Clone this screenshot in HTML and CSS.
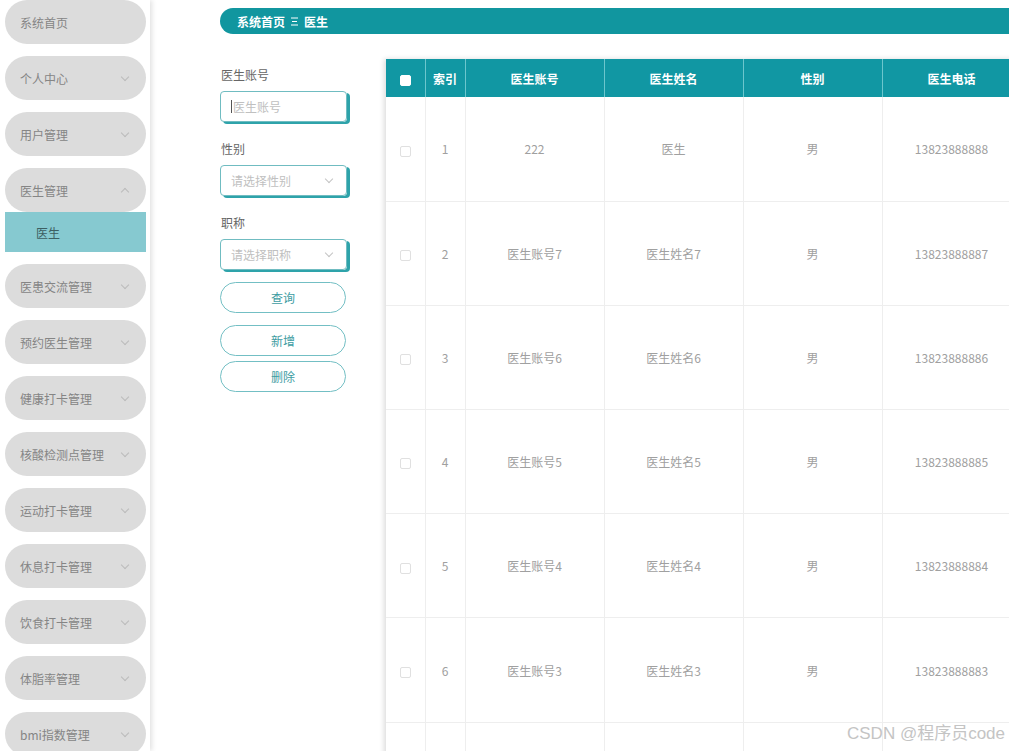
FILE: index.html
```html
<!DOCTYPE html>
<html lang="zh-CN">
<head>
    <meta charset="UTF-8">
    <title>医生</title>
    <link rel="stylesheet" href="styles.css">
</head>
<body>
    <div class="layout">
        <aside class="sidebar">
            <div class="menu-item">系统首页</div>
            <div class="menu-item">个人中心<span class="arrow down"></span></div>
            <div class="menu-item">用户管理<span class="arrow down"></span></div>
            <div class="menu-item open">医生管理<span class="arrow up"></span></div>
            <div class="sub-item">医生</div>
            <div class="menu-item">医患交流管理<span class="arrow down"></span></div>
            <div class="menu-item">预约医生管理<span class="arrow down"></span></div>
            <div class="menu-item">健康打卡管理<span class="arrow down"></span></div>
            <div class="menu-item">核酸检测点管理<span class="arrow down"></span></div>
            <div class="menu-item">运动打卡管理<span class="arrow down"></span></div>
            <div class="menu-item">休息打卡管理<span class="arrow down"></span></div>
            <div class="menu-item">饮食打卡管理<span class="arrow down"></span></div>
            <div class="menu-item">体脂率管理<span class="arrow down"></span></div>
            <div class="menu-item">bmi指数管理<span class="arrow down"></span></div>
        </aside>

        <main class="main">
            <div class="breadcrumb">
                <span class="crumb">系统首页</span>
                <svg class="crumb-sep" width="7" height="9" viewBox="0 0 7 9">
                    <path d="M0 1h7M1 4.5h5M0 8h7" stroke="#fff" stroke-width="1"/>
                </svg>
                <span class="crumb">医生</span>
            </div>

            <div class="content">
                <div class="search-form">
                    <div class="form-group">
                        <label>医生账号</label>
                        <div class="field"><span class="caret"></span><span class="placeholder">医生账号</span></div>
                    </div>
                    <div class="form-group">
                        <label>性别</label>
                        <div class="field select"><span class="placeholder">请选择性别</span><span class="arrow down"></span></div>
                    </div>
                    <div class="form-group">
                        <label>职称</label>
                        <div class="field select"><span class="placeholder">请选择职称</span><span class="arrow down"></span></div>
                    </div>
                    <button class="btn btn-query">查询</button>
                    <button class="btn btn-add">新增</button>
                    <button class="btn btn-del">删除</button>
                </div>

                <div class="table-wrap">
                    <table class="data-table">
                        <thead>
                            <tr>
                                <th class="col-check"><span class="check head"></span></th>
                                <th class="col-index">索引</th>
                                <th class="col-wide">医生账号</th>
                                <th class="col-wide">医生姓名</th>
                                <th class="col-wide">性别</th>
                                <th class="col-wide">医生电话</th>
                            </tr>
                        </thead>
                        <tbody>
                            <tr><td><span class="check"></span></td><td>1</td><td>222</td><td>医生</td><td>男</td><td>13823888888</td></tr>
                            <tr><td><span class="check"></span></td><td>2</td><td>医生账号7</td><td>医生姓名7</td><td>男</td><td>13823888887</td></tr>
                            <tr><td><span class="check"></span></td><td>3</td><td>医生账号6</td><td>医生姓名6</td><td>男</td><td>13823888886</td></tr>
                            <tr><td><span class="check"></span></td><td>4</td><td>医生账号5</td><td>医生姓名5</td><td>男</td><td>13823888885</td></tr>
                            <tr><td><span class="check"></span></td><td>5</td><td>医生账号4</td><td>医生姓名4</td><td>男</td><td>13823888884</td></tr>
                            <tr><td><span class="check"></span></td><td>6</td><td>医生账号3</td><td>医生姓名3</td><td>男</td><td>13823888883</td></tr>
                            <tr class="row-partial"><td></td><td></td><td></td><td></td><td></td><td></td></tr>
                        </tbody>
                    </table>
                </div>
            </div>
        </main>
    </div>

    <div class="watermark">CSDN @程序员code</div>
</body>
</html>
```

FILE: styles.css
```css
* {
    margin: 0;
    padding: 0;
    box-sizing: border-box;
    font-family: "Noto Sans CJK SC", "Liberation Sans", sans-serif;
}

body {
    width: 1009px;
    height: 751px;
    overflow: hidden;
    background: #fff;
    position: relative;
}

.layout {
    display: flex;
    height: 100%;
}

/* Sidebar */
.sidebar {
    width: 150px;
    flex-shrink: 0;
    padding: 0 4px 0 5px;
    background: #fff;
    box-shadow: 2px 0 5px rgba(0, 0, 0, 0.12);
    position: relative;
    z-index: 2;
}

.menu-item {
    height: 44px;
    margin-bottom: 12px;
    padding: 0 15px;
    border-radius: 22px;
    background: #dcdcdc;
    color: #858585;
    font-size: 12px;
    display: flex;
    align-items: center;
    justify-content: space-between;
}

.menu-item.open {
    margin-bottom: 0;
}

.sub-item {
    height: 40px;
    margin-bottom: 12px;
    padding-left: 31px;
    background: #86c9d0;
    color: #3d5f62;
    font-size: 12px;
    display: flex;
    align-items: center;
}

.arrow {
    width: 6px;
    height: 6px;
    border-right: 1px solid #bbb;
    border-bottom: 1px solid #bbb;
    margin-right: 3px;
}

.arrow.down {
    transform: rotate(45deg);
    margin-top: -3px;
}

.arrow.up {
    transform: rotate(-135deg);
    margin-top: 3px;
}

/* Main */
.main {
    flex: 1;
    padding: 8px 0 0 70px;
    overflow: hidden;
}

.breadcrumb {
    height: 26px;
    width: 820px;
    background: #11969f;
    border-radius: 13px 0 0 13px;
    padding-left: 17px;
    display: flex;
    align-items: center;
    gap: 6px;
    color: #fff;
    font-size: 12px;
    font-weight: bold;
}

.content {
    display: flex;
    gap: 37px;
    margin-top: 25px;
}

/* Search form */
.search-form {
    width: 129px;
    flex-shrink: 0;
    padding-top: 8px;
    display: flex;
    flex-direction: column;
}

.form-group {
    margin-bottom: 19px;
}

.form-group label {
    display: block;
    font-size: 12px;
    color: #666;
    line-height: 16px;
    margin-bottom: 8px;
    padding-left: 1px;
}

.field {
    height: 31px;
    width: 127px;
    border: 1px solid #70bcc1;
    border-radius: 4px;
    box-shadow: 3px 2px 0 #2ea3aa;
    padding: 0 10px;
    display: flex;
    align-items: center;
    font-size: 12px;
}

.field .placeholder {
    color: #c0c0c0;
}

.field.select {
    justify-content: space-between;
}

.field.select .arrow {
    border-color: #c4c4c4;
    margin-right: 4px;
}

.caret {
    width: 1px;
    height: 13px;
    background: #555;
    margin-right: 1px;
}

.btn {
    width: 126px;
    height: 31px;
    border: 1px solid #73bfc4;
    border-radius: 16px;
    background: #fff;
    color: #3d9ca2;
    font-size: 12px;
    font-family: "Noto Sans CJK SC", sans-serif;
}

.btn-query {
    margin-top: -7px;
}

.btn-add {
    margin-top: 12px;
}

.btn-del {
    margin-top: 5px;
}

/* Table */
.table-wrap {
    flex-shrink: 0;
    box-shadow: -2px 0 5px rgba(0, 0, 0, 0.14);
}

.data-table {
    border-collapse: collapse;
    table-layout: fixed;
    width: 635px;
}

.data-table th {
    height: 38px;
    background: #1197a3;
    color: #fff;
    font-size: 12px;
    font-weight: bold;
    text-align: center;
    border-right: 1px solid #6cc6cd;
}

.data-table td {
    height: 104.2px;
    text-align: center;
    font-size: 12px;
    color: #a0a0a0;
    border-right: 1px solid #eee;
    border-bottom: 1px solid #eee;
}

.col-check {
    width: 39px;
}

.col-index {
    width: 40px;
}

.col-wide {
    width: 139px;
}

.check {
    display: inline-block;
    width: 11px;
    height: 11px;
    border: 1px solid #e0e0e0;
    border-radius: 2px;
    vertical-align: middle;
}

.check.head {
    background: #fff;
    border-color: #fff;
}

.watermark {
    position: absolute;
    right: 4px;
    bottom: 7px;
    font-size: 17px;
    color: #c4c4c4;
    font-family: "Liberation Sans", "Noto Sans CJK SC", sans-serif;
}
```
